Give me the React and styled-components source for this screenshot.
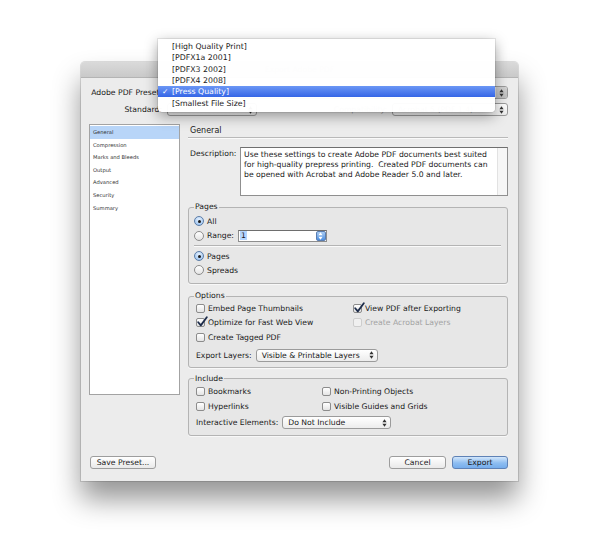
import styled, { createGlobalStyle } from "styled-components"

const font = `"DejaVu Sans", "Liberation Sans", sans-serif`

const GlobalStyle = createGlobalStyle`
    html, body {
        margin: 0;
        background: #fff;
        font-family: ${font};
        color: #1a1a1a;
    }
    * { box-sizing: border-box; }
`

const Stage = styled.div`
    position: relative;
    width: 600px;
    height: 560px;
    padding: 62px 0 0 81px;
    overflow: hidden;
`

const Window = styled.div`
    width: 437px;
    background: #ececec;
    border-radius: 4px 4px 0 0;
    box-shadow: 0 18px 28px rgba(0, 0, 0, 0.42), 0 0 0 1px rgba(0, 0, 0, 0.12);
`

const TitleBar = styled.div`
    height: 16px;
    border-radius: 4px 4px 0 0;
    background: linear-gradient(#dadada, #c9c9c9);
    border-bottom: 1px solid #b4b4b4;
    text-align: center;
    font-size: 7.7px;
    line-height: 16px;
    color: #a8a8a8;
`

const Body = styled.div`
    padding: 8px 10px 12px 8px;
`

const TopRow = styled.div`
    display: flex;
    align-items: center;
    height: 13px;
    gap: 4px;
    & + & { margin-top: 4px; }
`

const RowLabel = styled.div`
    width: ${p => p.$w}px;
    text-align: right;
    font-size: 7.7px;
    white-space: nowrap;
    color: ${p => p.$faint ? "#9a9a9a" : "#1a1a1a"};
    padding-right: 1px;
`

const Popup = styled.div`
    display: flex;
    align-items: center;
    height: 13px;
    width: ${p => p.$w ? `${p.$w}px` : "auto"};
    flex: ${p => p.$w ? "none" : 1};
    border: 1px solid #9b9b9b;
    border-radius: 3px;
    background: linear-gradient(#ffffff, #ececec);
    font-size: 7.7px;
    color: ${p => p.$faint ? "#a0a0a0" : "#1a1a1a"};
    overflow: hidden;
`

const PopupText = styled.span`
    flex: 1;
    padding-left: 5px;
    white-space: nowrap;
`

const ArrowBox = styled.span`
    display: flex;
    align-items: center;
    justify-content: center;
    width: 11px;
    height: 100%;
    background: ${p => p.$open ? "linear-gradient(#d2d2d2, #bdbdbd)" : "transparent"};
`

const Arrows = ({ color = "#333" }) => (
    <svg width="5" height="8" viewBox="0 0 5 8">
        <path d="M2.5 0.3 L4.6 3.2 H0.4Z M2.5 7.7 L4.6 4.8 H0.4Z" fill={color} />
    </svg>
)

const Main = styled.div`
    display: flex;
    align-items: flex-start;
    gap: 8px;
    margin-top: 8px;
`

const Sidebar = styled.div`
    width: 91px;
    height: 271px;
    background: #fff;
    border: 1px solid #a3a3a3;
    padding-top: 1px;
`

const SidebarItem = styled.div`
    height: 12.6px;
    line-height: 12.6px;
    padding-left: 3px;
    font-size: 5.2px;
    color: #333;
    background: ${p => p.$active ? "#b8d5f8" : "transparent"};
`

const Panel = styled.div`
    flex: 1;
    display: flex;
    flex-direction: column;
`

const SectionTitle = styled.div`
    height: 14px;
    line-height: 13px;
    padding-left: 2px;
    font-size: 8px;
    border-bottom: 1px solid #b9b9b9;
    box-shadow: 0 1px 0 #fafafa;
`

const DescRow = styled.div`
    display: flex;
    margin-top: 9px;
`

const DescLabel = styled.div`
    width: 52px;
    padding: 2px 0 0 2px;
    font-size: 7.7px;
`

const DescBox = styled.div`
    flex: 1;
    display: flex;
    height: 49px;
    background: #fff;
    border: 1px solid #8f8f8f;
    border-top-color: #6f6f6f;
`

const DescText = styled.div`
    flex: 1;
    padding: 2px 0 0 3px;
    font-size: 7.7px;
    line-height: 9.8px;
    white-space: pre;
`

const DescScroll = styled.div`
    width: 10px;
    background: #f6f6f6;
    border-left: 1px solid #e2e2e2;
`

const Group = styled.fieldset`
    margin: ${p => p.$top}px 0 0;
    padding: ${p => p.$pt || 0}px 6px ${p => p.$bottom}px 7px;
    border: 1px solid #b4b4b4;
    border-radius: 3px;
    background: rgba(0, 0, 0, 0.018);
    box-shadow: 0 1px 0 #f8f8f8;
    min-width: 0;
`

const Legend = styled.legend`
    padding: 0 1px;
    margin-left: -2px;
    font-size: 7.7px;
    line-height: 10px;
`

const OptionRow = styled.div`
    display: flex;
    align-items: center;
    height: ${p => p.$h || 14}px;
    margin-top: ${p => p.$mt || 0}px;
    font-size: 7.7px;
    color: ${p => p.$disabled ? "#a3a3a3" : "#1a1a1a"};
    white-space: nowrap;
`

const Grid = styled.div`
    display: grid;
    grid-template-columns: ${p => p.$col}px 1fr;
    grid-auto-rows: ${p => p.$row}px;
`

const RadioDot = styled.span`
    position: relative;
    width: 10px;
    height: 10px;
    margin: 0 3px 0 -2px;
    border-radius: 50%;
    border: 1px solid ${p => p.$on ? "#5b7ca6" : "#8c8c8c"};
    background: ${p => p.$on ? "radial-gradient(circle at 50% 30%, #e4f0fd, #8fbbee)" : "linear-gradient(#ffffff, #e3e3e3)"};
    &::after {
        content: "";
        display: ${p => p.$on ? "block" : "none"};
        position: absolute;
        left: 2.5px;
        top: 2.5px;
        width: 3px;
        height: 3px;
        border-radius: 50%;
        background: #1b1b1b;
    }
`

const Box = styled.span`
    position: relative;
    width: 9px;
    height: 9px;
    margin-right: 3px;
    border-radius: 2px;
    border: 1px solid ${p => p.$disabled ? "#cdcdcd" : "#8c8c8c"};
    background: ${p => p.$disabled ? "#f0f0f0" : "linear-gradient(#ffffff, #e4e4e4)"};
    svg {
        position: absolute;
        left: 0px;
        top: -3px;
    }
`

const Checkbox = ({ on, disabled, children }) => (
    <OptionRow $disabled={disabled} $h="100%">
        <Box $disabled={disabled}>
            {on && (
                <svg width="11" height="11" viewBox="0 0 11 11">
                    <path d="M1.2 6.2 L3.8 9.4 L9.8 1.2" fill="none" stroke="#1d2c4a" strokeWidth="1.8" strokeLinecap="round" strokeLinejoin="round" />
                </svg>
            )}
        </Box>
        {children}
    </OptionRow>
)

const Radio = ({ on, children }) => (
    <OptionRow>
        <RadioDot $on={on} />
        {children}
    </OptionRow>
)

const RangeField = styled.div`
    display: flex;
    align-items: center;
    width: 89px;
    height: 12px;
    margin-left: 4px;
    background: #fff;
    border: 1px solid #8e8e8e;
    border-top-color: #6e6e6e;
`

const RangeValue = styled.span`
    flex: 1;
    padding-left: 1px;
    span {
        background: #b5d5ff;
        padding: 0 1px;
    }
`

const FieldStepper = styled.span`
    display: flex;
    align-items: center;
    justify-content: center;
    width: 10px;
    height: 10px;
    border-radius: 2px;
    background: linear-gradient(#a9cdf5, #4e8fe0);
    border: 1px solid #5a7eb2;
`

const Separator = styled.div`
    height: 0;
    margin: 2px 0 3px -2px;
    border-top: 1px solid #b4b4b4;
    box-shadow: 0 1px 0 #fafafa;
`

const InlineLabel = styled.span`
    margin-right: 4px;
`

const Footer = styled.div`
    display: flex;
    align-items: center;
    margin-top: 20px;
    padding-left: 1px;
`

const Button = styled.div`
    width: ${p => p.$w}px;
    height: 13px;
    margin-left: ${p => p.$ml || 0}px;
    border-radius: 3px;
    border: 1px solid ${p => p.$primary ? "#5f82b6" : "#9d9d9d"};
    background: ${p => p.$primary ? "linear-gradient(#d2e6fb, #8dbdf1 55%, #76adec)" : "linear-gradient(#ffffff, #e9e9e9)"};
    text-align: center;
    font-size: 7.7px;
    line-height: 11px;
    color: #1a1a1a;
`

const Spacer = styled.div`
    flex: 1;
`

const Menu = styled.div`
    position: absolute;
    left: 158px;
    top: 39px;
    width: 337px;
    padding: 2px 0 3px;
    background: rgba(255, 255, 255, 0.97);
    border-radius: 0 0 4px 4px;
    box-shadow: 0 4px 14px rgba(0, 0, 0, 0.38), 0 0 0 1px rgba(0, 0, 0, 0.08);
`

const MenuItem = styled.div`
    display: flex;
    align-items: center;
    height: 11.3px;
    font-size: 7.8px;
    color: ${p => p.$selected ? "#fff" : "#1a1a1a"};
    background: ${p => p.$selected ? "linear-gradient(#6b97f5, #3565e6)" : "transparent"};
`

const CheckMark = styled.span`
    width: 14px;
    padding-left: 4px;
    font-size: 7.7px;
`

const presets = ["[High Quality Print]", "[PDFX1a 2001]", "[PDFX3 2002]", "[PDFX4 2008]", "[Press Quality]", "[Smallest File Size]"]
const sections = ["General", "Compression", "Marks and Bleeds", "Output", "Advanced", "Security", "Summary"]

export default function App() {
    return (
        <Stage>
            <GlobalStyle />
            <Window>
                <TitleBar>Export Adobe PDF</TitleBar>
                <Body>
                    <TopRow>
                        <RowLabel $w={74}>Adobe PDF Preset:</RowLabel>
                        <Popup>
                            <PopupText />
                            <ArrowBox $open><Arrows /></ArrowBox>
                        </Popup>
                    </TopRow>
                    <TopRow>
                        <RowLabel $w={74}>Standard:</RowLabel>
                        <Popup $w={90}>
                            <PopupText />
                            <ArrowBox><Arrows /></ArrowBox>
                        </Popup>
                        <Spacer />
                        <RowLabel $w={70} $faint>Compatibility:</RowLabel>
                        <Popup $w={116} $faint>
                            <PopupText>Acrobat 5 (PDF 1.4)</PopupText>
                            <ArrowBox><Arrows /></ArrowBox>
                        </Popup>
                    </TopRow>
                    <Main>
                        <Sidebar>
                            {sections.map((s, i) => (
                                <SidebarItem key={s} $active={i === 0}>{s}</SidebarItem>
                            ))}
                        </Sidebar>
                        <Panel>
                            <SectionTitle>General</SectionTitle>
                            <DescRow>
                                <DescLabel>Description:</DescLabel>
                                <DescBox>
                                    <DescText>{"Use these settings to create Adobe PDF documents best suited\nfor high-quality prepress printing.  Created PDF documents can\nbe opened with Acrobat and Adobe Reader 5.0 and later."}</DescText>
                                    <DescScroll />
                                </DescBox>
                            </DescRow>
                            <Group $top={6} $pt={2} $bottom={6}>
                                <Legend>Pages</Legend>
                                <Radio on>All</Radio>
                                <OptionRow $h={15}>
                                    <RadioDot />
                                    Range:
                                    <RangeField>
                                        <RangeValue><span>1</span></RangeValue>
                                        <FieldStepper><Arrows color="#fff" /></FieldStepper>
                                    </RangeField>
                                </OptionRow>
                                <Separator />
                                <Radio on>Pages</Radio>
                                <Radio>Spreads</Radio>
                            </Group>
                            <Group $top={7} $bottom={5}>
                                <Legend>Options</Legend>
                                <Grid $col={157} $row={14.5}>
                                    <Checkbox>Embed Page Thumbnails</Checkbox>
                                    <Checkbox on>View PDF after Exporting</Checkbox>
                                    <Checkbox on>Optimize for Fast Web View</Checkbox>
                                    <Checkbox disabled>Create Acrobat Layers</Checkbox>
                                    <Checkbox>Create Tagged PDF</Checkbox>
                                </Grid>
                                <OptionRow $h={13} $mt={4}>
                                    <InlineLabel>Export Layers:</InlineLabel>
                                    <Popup $w={122}>
                                        <PopupText>Visible &amp; Printable Layers</PopupText>
                                        <ArrowBox><Arrows /></ArrowBox>
                                    </Popup>
                                </OptionRow>
                            </Group>
                            <Group $top={6} $bottom={5}>
                                <Legend>Include</Legend>
                                <Grid $col={126} $row={15}>
                                    <Checkbox>Bookmarks</Checkbox>
                                    <Checkbox>Non-Printing Objects</Checkbox>
                                    <Checkbox>Hyperlinks</Checkbox>
                                    <Checkbox>Visible Guides and Grids</Checkbox>
                                </Grid>
                                <OptionRow $h={14} $mt={2}>
                                    <InlineLabel>Interactive Elements:</InlineLabel>
                                    <Popup $w={109}>
                                        <PopupText>Do Not Include</PopupText>
                                        <ArrowBox><Arrows /></ArrowBox>
                                    </Popup>
                                </OptionRow>
                            </Group>
                        </Panel>
                    </Main>
                    <Footer>
                        <Button $w={66}>Save Preset...</Button>
                        <Spacer />
                        <Button $w={57}>Cancel</Button>
                        <Button $w={56} $ml={6} $primary>Export</Button>
                    </Footer>
                </Body>
            </Window>
            <Menu>
                {presets.map(p => (
                    <MenuItem key={p} $selected={p === "[Press Quality]"}>
                        <CheckMark>{p === "[Press Quality]" ? "✓" : ""}</CheckMark>
                        {p}
                    </MenuItem>
                ))}
            </Menu>
        </Stage>
    )
}
